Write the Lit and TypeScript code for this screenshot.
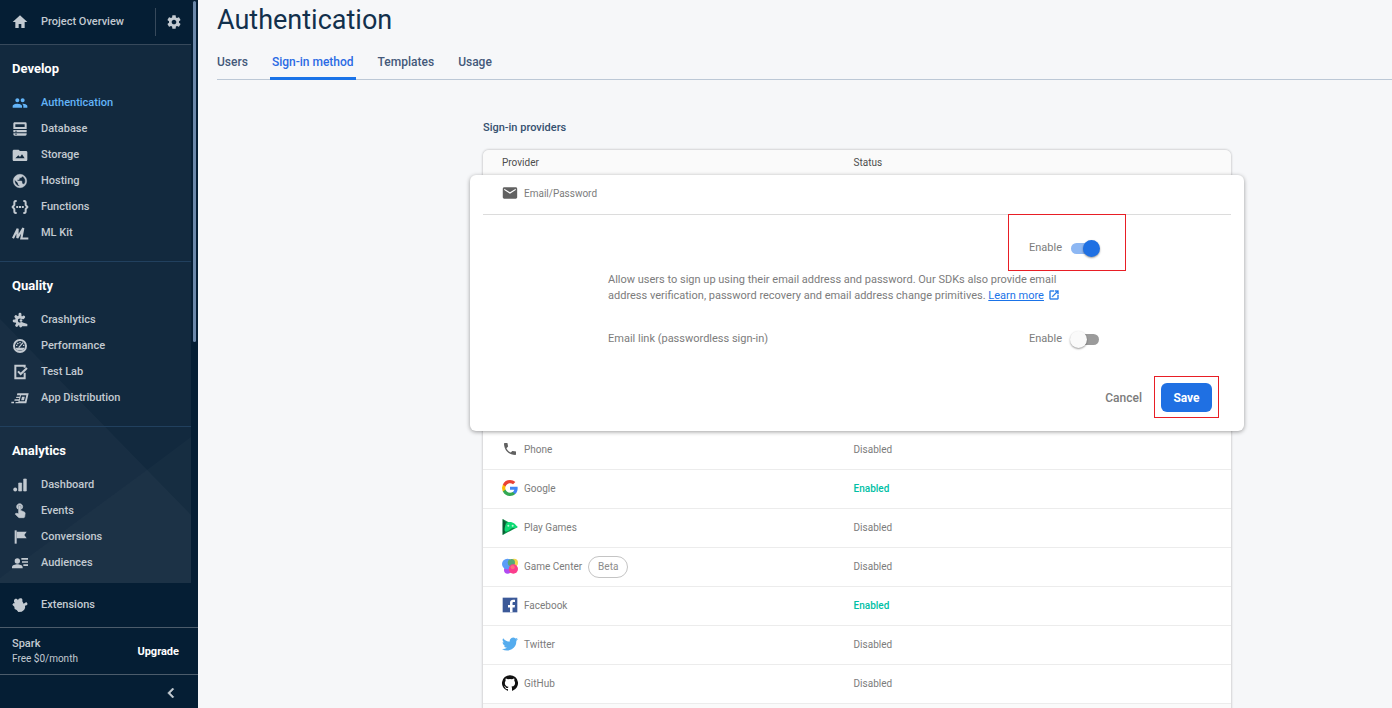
import { LitElement, html, svg, css } from "lit";
import type { TemplateResult } from "lit";
import { customElement, state } from "lit/decorators.js";
import { classMap } from "lit/directives/class-map.js";

const shapes: Record<string, unknown> = {
  home: svg`<path d="M10 21v-6h4v6h5v-9h4L12 2 1 12h4v9z"/>`,
  gear: svg`<path d="M19.43 12.98c.04-.32.07-.64.07-.98s-.03-.66-.07-.98l2.11-1.65c.19-.15.24-.42.12-.64l-2-3.46c-.12-.22-.39-.3-.61-.22l-2.49 1c-.52-.4-1.08-.73-1.69-.98l-.38-2.65C14.46 2.18 14.25 2 14 2h-4c-.25 0-.46.18-.49.42l-.38 2.65c-.61.25-1.17.59-1.69.98l-2.49-1c-.23-.09-.49 0-.61.22l-2 3.46c-.13.22-.07.49.12.64l2.11 1.65c-.04.32-.07.65-.07.98s.03.66.07.98l-2.11 1.65c-.19.15-.24.42-.12.64l2 3.46c.12.22.39.3.61.22l2.49-1c.52.4 1.08.73 1.69.98l.38 2.65c.03.24.24.42.49.42h4c.25 0 .46-.18.49-.42l.38-2.65c.61-.25 1.17-.59 1.69-.98l2.49 1c.23.09.49 0 .61-.22l2-3.46c.12-.22.07-.49-.12-.64l-2.11-1.65zM12 15.5c-1.93 0-3.5-1.57-3.5-3.5s1.57-3.5 3.5-3.5 3.5 1.57 3.5 3.5-1.57 3.5-3.5 3.5z"/>`,
  people: svg`<path d="M16 11c1.66 0 2.99-1.34 2.99-3S17.66 5 16 5s-3 1.34-3 3 1.34 3 3 3zm-8 0c1.66 0 2.99-1.34 2.99-3S9.66 5 8 5 5 6.34 5 8s1.34 3 3 3zm0 2c-2.33 0-7 1.17-7 3.5V19h14v-2.5c0-2.33-4.67-3.5-7-3.5zm8 0c-.29 0-.62.02-.97.05 1.16.84 1.97 1.97 1.97 3.45V19h6v-2.5c0-2.33-4.67-3.5-7-3.5z"/>`,
  database: svg`<path fill-rule="evenodd" d="M4 2h16a2 2 0 0 1 2 2v8H2V4c0-1.100.9-2 2-2zm1 3v4h14V5zM2 13.500h20V17H2zM5 14.500v1.500h2v-1.500zM2 18.500h20V20a2 2 0 0 1-2 2H4a2 2 0 0 1-2-2zM5 19.300v1.500h2v-1.500z"/>`,
  storage: svg`<path fill-rule="evenodd" d="M3 4h7l2 2h9c1.100 0 2 .9 2 2v11c0 1.100-.9 2-2 2H3c-1.100 0-2-.9-2-2V6c0-1.100.9-2 2-2zm2 13h14l-4-6-3 4-2.500-2.500z"/>`,
  hosting: svg`<path d="M12 2C6.480 2 2 6.480 2 12s4.480 10 10 10 10-4.480 10-10S17.520 2 12 2zm-1 17.930c-3.950-.49-7-3.850-7-7.930 0-.62.080-1.210.21-1.790L9 15v1c0 1.100.9 2 2 2v1.930zm6.900-2.540c-.26-.81-1-1.390-1.900-1.390h-1v-3c0-.55-.45-1-1-1H8v-2h2c.55 0 1-.45 1-1V7h2c1.100 0 2-.9 2-2v-.41c2.930 1.190 5 4.060 5 7.410 0 2.080-.8 3.970-2.100 5.390z" stroke="currentColor" stroke-width=".7"/>`,
  functions: svg`<path d="M7 3H5.500C4 3 3.500 4 3.500 5.500V9L1 12l2.500 3v3.500C3.500 20 4 21 5.500 21H7M17 3h1.500C20 3 20.500 4 20.500 5.500V9l2.500 3-2.500 3v3.500c0 1.500-.5 2.500-2 2.500H17" fill="none" stroke="currentColor" stroke-width="3"/><path d="M6.300 10.600h3v3h-3zm4.200 0h3v3h-3zm4.200 0h3v3h-3z"/>`,
  mlkit: svg`<path d="M1.500 20 8.500 5.500 8 19.500 17 4.500 14 20.200h10.500" fill="none" stroke="currentColor" stroke-width="3.200"/>`,
  crash: svg`<g fill="none" stroke="currentColor"><path d="M15.500 9.500a5 5 0 1 0 0 6.500" stroke-width="4"/><path d="M12 7V3.500M7.500 8.500 5.800 7M6.500 13.500H3.200M8.500 18l-1.500 2M13 19v2M16.500 8.500l1-1" stroke-width="4.400" stroke-linecap="round"/></g><circle cx="13.500" cy="12.800" r="2"/><path d="M15 15.500 23 18v3.500h-8z"/>`,
  performance: svg`<circle cx="12" cy="12" r="9" fill="none" stroke="currentColor" stroke-width="3"/><path d="M6 14.500h12v2c-3 3-9 3-12 0z"/><path d="M10 14.500 16.500 7M6 11h2M8 7.500l1.500 1.500M12 6v2M16.500 11h2" fill="none" stroke="currentColor" stroke-width="2"/>`,
  testlab: svg`<path d="M19 13v8.500H5v-19h14v3" fill="none" stroke="currentColor" stroke-width="3"/><path d="m9 11 4 4L22.500 6" fill="none" stroke="currentColor" stroke-width="3"/>`,
  distribution: svg`<path fill-rule="evenodd" d="M8 5h17l-3.500 15H5L5.500 18h4l.5-2H3.500L4 14h6.500l.5-2H6l.6-2h4.900l.4-2H7.300zM13.500 8l-2.200 9h8L21.500 8z"/><path d="M15 10h4.200l-1.200 5.200h-4.200zM-1 17.500h4V20h-4z"/>`,
  dashboard: svg`<path d="M17.500 3h4v18h-4zM10 9h4.500v12H10z" stroke="currentColor" stroke-linejoin="round"/><circle cx="4.800" cy="18.700" r="2.900"/>`,
  events: svg`<path d="M9 11.240V7.500C9 6.120 10.120 5 11.500 5S14 6.120 14 7.500v3.740c1.210-.81 2-2.180 2-3.740C16 5.010 13.990 3 11.500 3S7 5.010 7 7.500c0 1.560.79 2.930 2 3.740zm9.840 4.630-4.540-2.260c-.17-.07-.35-.11-.54-.11H13v-6c0-.83-.67-1.500-1.500-1.500S10 6.670 10 7.500v10.740l-3.430-.72c-.08-.01-.15-.03-.24-.03-.31 0-.59.13-.79.33l-.79.8 4.940 4.940c.27.27.65.44 1.060.44h6.790c.75 0 1.330-.55 1.440-1.280l.75-5.270c.01-.07.02-.14.02-.2 0-.62-.38-1.160-.91-1.380z" transform="translate(0 -2)" stroke="currentColor"/>`,
  flag: svg`<path d="M4 2h3v20H4z"/><path d="M7 4h15l-3.500 5 3.500 5H7z"/>`,
  audiences: svg`<circle cx="8" cy="9" r="4"/><path d="M0 20v-2c0-2.700 5-4.200 8-4.200s8 1.500 8 4.200v2zM14 4.500h10V7H14zm1 4.700h9v2.500h-9zm2 4.700h7v2.500h-7z"/>`,
  funnel: svg`<path d="M5 3h5l1 9H4zM13 12h5v9h-5z"/>`,
  extensions: svg`<path d="M4 3.500C6 2 8 3 9 5c.5-2 2-3.500 4.500-3 2 .5 2.500 2 2 4.500l2 3.500 4-2.500 2 3-1.500 2-2.500.5c1 3.500-1 7-5 9l-5 .5-2.500-3L4 18l-.5-3.500-3-3 2-2.500 2 .5C2.500 7.500 2.500 5 4 3.500z"/>`,
  chevron: svg`<path d="M15.410 7.410 14 6l-6 6 6 6 1.410-1.410L10.830 12z" transform="translate(-3 -3) scale(1.250)" stroke="currentColor" stroke-width=".6"/>`,
  mail: svg`<path d="M20 4H4c-1.100 0-1.990.9-1.990 2L2 18c0 1.100.9 2 2 2h16c1.100 0 2-.9 2-2V6c0-1.100-.9-2-2-2zm0 4-8 5-8-5V6l8 5 8-5v2z" transform="translate(-1 -1) scale(1.080)"/>`,
  phone: svg`<path d="M6.620 10.790c1.440 2.830 3.760 5.140 6.590 6.590l2.200-2.200c.27-.27.67-.36 1.020-.24 1.120.37 2.330.57 3.570.57.55 0 1 .45 1 1V20c0 .55-.45 1-1 1-9.390 0-17-7.610-17-17 0-.55.45-1 1-1h3.500c.55 0 1 .45 1 1 0 1.250.2 2.450.57 3.570.11.35.03.74-.25 1.020l-2.200 2.200z"/>`,
  open: svg`<path d="M19 19H5V5h7V3H5c-1.110 0-2 .9-2 2v14c0 1.100.89 2 2 2h14c1.100 0 2-.9 2-2v-7h-2v7zM14 3v2h3.590l-9.830 9.830 1.410 1.410L19 6.410V10h2V3h-7z" stroke="currentColor" stroke-width=".6"/>`,
  google: svg`<path fill="#4285f4" d="M23.500 12.270c0-.79-.07-1.540-.19-2.270H12v4.510h6.470a5.570 5.570 0 0 1-2.400 3.580v3h3.860c2.260-2.090 3.570-5.170 3.570-8.820z"/><path fill="#34a853" d="M12 24c3.240 0 5.950-1.080 7.930-2.910l-3.860-3c-1.080.72-2.450 1.160-4.070 1.160-3.130 0-5.780-2.110-6.730-4.960H1.290v3.090A12 12 0 0 0 12 24z"/><path fill="#fbbc05" d="M5.270 14.290a7.200 7.200 0 0 1 0-4.580V6.620H1.290a12 12 0 0 0 0 10.760z"/><path fill="#ea4335" d="M12 4.750c1.770 0 3.350.61 4.600 1.800l3.420-3.420C17.950 1.190 15.240 0 12 0A12 12 0 0 0 1.290 6.620l3.980 3.090C6.220 6.860 8.870 4.750 12 4.750z"/>`,
  play: svg`<path fill="#0a8a45" d="M1 0v24l22.500-12z"/><path fill="#0b5b34" d="M1 0v24l4-5V5z"/><path fill="#0ddb73" d="M7 6c3-2.500 8-2 12 1l4.500 5-3 2c-3-1-6-.5-8 1.500-3 3-8 4.500-8.500 2C3.500 14.500 4.500 9 7 6z"/><circle cx="9.500" cy="10" r="1.500" fill="#baf7d5"/><circle cx="16" cy="10" r="1.500" fill="#baf7d5"/>`,
  gamecenter: svg`<circle cx="18" cy="7" r="6" fill="#f3d64a"/><circle cx="8.500" cy="18" r="5.500" fill="#b14af0"/><circle cx="8" cy="9" r="8" fill="#5a9cf8"/><circle cx="14" cy="7" r="5.500" fill="#55a878"/><circle cx="17" cy="16.500" r="7" fill="#fb3d8c"/><circle cx="16" cy="14" r="3" fill="#ff6c7e"/>`,
  facebook: svg`<path fill="#3b5998" d="M1 1h22v22H1z"/><path fill="#fff" d="M19.500 4v3.600h-2c-1.300 0-1.700.6-1.700 1.700V12h3.700l-.5 3.700h-3.200V23H12v-7.300H9V12h3V8.800C12 5.700 13.800 4 16.700 4z"/>`,
  twitter: svg`<path fill="#55acee" d="M24 4.600a10 10 0 0 1-2.800.8 5 5 0 0 0 2.100-2.700 10 10 0 0 1-3.100 1.200 4.900 4.900 0 0 0-8.400 4.500A14 14 0 0 1 1.700 3.200a4.900 4.900 0 0 0 1.500 6.500A5 5 0 0 1 1 9.100a4.900 4.900 0 0 0 4 4.900 5 5 0 0 1-2.300.1 4.900 4.900 0 0 0 4.600 3.400A9.900 9.900 0 0 1 0 19.500 14 14 0 0 0 21.500 7.100 10 10 0 0 0 24 4.600z"/>`,
  github: svg`<path fill="#111" d="M12 .3a12 12 0 0 0-3.800 23.400c.6.1.8-.3.8-.6v-2c-3.300.7-4-1.600-4-1.600-.6-1.400-1.400-1.800-1.400-1.800-1-.7.1-.7.1-.7 1.200 0 1.900 1.200 1.900 1.200 1 1.800 2.800 1.300 3.500 1 0-.8.400-1.300.7-1.600-2.700-.3-5.500-1.300-5.500-6 0-1.200.5-2.300 1.300-3.100-.2-.4-.6-1.600 0-3.200 0 0 1-.3 3.400 1.200a11.500 11.500 0 0 1 6 0c2.300-1.500 3.300-1.200 3.300-1.200.6 1.600.2 2.800 0 3.200.9.8 1.300 1.900 1.300 3.200 0 4.600-2.800 5.600-5.500 5.900.5.400.9 1 .9 2.200v3.300c0 .3.100.7.800.6A12 12 0 0 0 12 .3"/>`,
};

const icon = (name: string): TemplateResult =>
  html`<svg class="icon" viewBox="0 0 24 24" fill="currentColor" aria-hidden="true">${shapes[name]}</svg>`;

const base = css`
  * { box-sizing: border-box; }
  a { color: inherit; text-decoration: none; }
  .icon { width: 16px; height: 16px; flex: none; display: block; overflow: visible; }
  button { font: inherit; border: 0; background: none; padding: 0; cursor: pointer; color: inherit; }
`;

const groups = [
  { title: "Develop", items: [["people", "Authentication"], ["database", "Database"], ["storage", "Storage"], ["hosting", "Hosting"], ["functions", "Functions"], ["mlkit", "ML Kit"]] },
  { title: "Quality", items: [["crash", "Crashlytics"], ["performance", "Performance"], ["testlab", "Test Lab"], ["distribution", "App Distribution"]] },
  { title: "Analytics", items: [["dashboard", "Dashboard"], ["events", "Events"], ["flag", "Conversions"], ["audiences", "Audiences"], ["funnel", ""]] },
];

@customElement("side-nav")
export class SideNav extends LitElement {
  static styles = [base, css`
    :host { display: flex; flex-direction: column; width: 198px; flex: none; background: #051e34; color: #c3cad1; font: 500 11px/16px Roboto, sans-serif; }
    .scroll { flex: 1; min-height: 0; display: flex; position: relative; }
    .menu { flex: 1; min-width: 0; overflow: hidden; position: relative; margin-right: 7px; display: flex; flex-direction: column; }
    .thumb { position: absolute; right: 2px; top: 1px; width: 3px; height: 341px; border-radius: 2px; background: #6b88aa; }
    .overview { display: flex; align-items: center; flex: none; height: 45px; padding-left: 12px; border-bottom: 1px solid #37495b; }
    .overview a { display: flex; align-items: center; gap: 13px; flex: 1; }
    .overview button { height: 28px; width: 36px; display: grid; place-items: center; border-left: 1px solid #37495b; }
    .groups { flex: 1; min-height: 0; overflow: hidden; background: #12293e; position: relative; }
    .facets { position: absolute; left: 0; bottom: 0; width: 100%; height: 264px; }
    .group { position: relative; padding: 16px 12px 15px; border-bottom: 1px solid #21405e; }
    .group:last-of-type { border: 0; }
    h2 { margin: 0 0 13px; font: 700 13px/16px "Google Sans", Roboto, sans-serif; color: #fff; }
    ul { list-style: none; margin: 0; padding: 0; }
    li a { display: flex; align-items: center; gap: 13px; height: 26px; }
    .current { color: #63b4f8; }
    .extensions { display: flex; align-items: center; gap: 13px; height: 44px; padding: 0 12px; }
    .plan { display: flex; align-items: center; justify-content: space-between; height: 48px; padding: 0 19px 0 12px; border-top: 1px solid #4c5c6b; border-bottom: 1px solid #4c5c6b; line-height: 15px; }
    .plan small { display: block; font: 400 10px/15px Roboto, sans-serif; }
    .upgrade { color: #fff; font-weight: 700; }
    .collapse { display: flex; justify-content: flex-end; align-items: center; height: 33px; padding: 2px 19px 0 0; }
  `];

  render() {
    return html`
      <div class="scroll">
        <nav class="menu" aria-label="Project">
          <div class="overview">
            <a href="#overview">${icon("home")}Project Overview</a>
            <button aria-label="Project settings">${icon("gear")}</button>
          </div>
          <div class="groups">
            <svg class="facets" viewBox="0 0 191 264" preserveAspectRatio="none" aria-hidden="true">
              <path d="M0 0 191 196V264H0z" fill="#fff" fill-opacity=".026" />
              <path d="M191 118 147 151 0 259V264H191z" fill="#fff" fill-opacity=".018" />
            </svg>
            ${groups.map((g) => html`
              <section class="group">
                <h2>${g.title}</h2>
                <ul>
                  ${g.items.map(([glyph, label]) => html`
                    <li><a href="#${glyph}" class=${classMap({ current: glyph === "people" })}>${icon(glyph)}${label}</a></li>`)}
                </ul>
              </section>`)}
          </div>
        </nav>
        <div class="thumb"></div>
      </div>
      <a class="extensions" href="#extensions">${icon("extensions")}Extensions</a>
      <div class="plan">
        <div>Spark<small>Free $0/month</small></div>
        <button class="upgrade">Upgrade</button>
      </div>
      <div class="collapse"><button aria-label="Collapse menu">${icon("chevron")}</button></div>
    `;
  }
}

const providers = [
  { glyph: "phone", name: "Phone", on: false },
  { glyph: "google", name: "Google", on: true },
  { glyph: "play", name: "Play Games", on: false },
  { glyph: "gamecenter", name: "Game Center", on: false, beta: true },
  { glyph: "facebook", name: "Facebook", on: true },
  { glyph: "twitter", name: "Twitter", on: false },
  { glyph: "github", name: "GitHub", on: false },
];

@customElement("provider-table")
export class ProviderTable extends LitElement {
  @state() private password = true;
  @state() private link = false;

  static styles = [base, css`
    :host { display: block; font: 400 10px/16px Roboto, sans-serif; color: #7c7c7c; }
    .card { border-radius: 6px 6px 0 0; background: #fafafa; box-shadow: 0 0 2px 1px rgba(0, 0, 0, .14); padding-bottom: 24px; }
    table { width: 100%; border-collapse: separate; border-spacing: 0; table-layout: fixed; }
    th { height: 25px; padding: 0 19px; text-align: left; font: 400 10px/16px Roboto, sans-serif; color: #4d4d4d; background: #fafafa; }
    th:first-child { width: 47%; border-radius: 6px 0 0 0; }
    th:last-child { border-radius: 0 6px 0 0; }
    td { height: 39px; padding: 0 19px; border-bottom: 1px solid #ececec; background: #fff; }
    .name { display: flex; align-items: center; gap: 6px; }
    .name .icon { color: #616161; margin-bottom: 2px; }
    .beta { border: 1px solid #c4c4c4; border-radius: 11px; padding: 2px 9px; color: #8c8c8c; }
    .on { color: #00bfa5; font-weight: 500; }
    td.open { padding: 0; border: 0; }
    .panel { position: relative; margin: 0 -13px; height: 256px; padding: 0 13px; background: #fff; border-radius: 6px; box-shadow: 0 1px 4px rgba(0, 0, 0, .38); }
    .panel .name { height: 40px; padding: 0 19px 2px; border-bottom: 1px solid #dcdcdc; }
    .body { padding: 24px 132px 0 125px; font-size: 11px; }
    .switch { display: flex; justify-content: flex-end; }
    .switch label { display: flex; align-items: center; gap: 9px; position: relative; }
    .password { height: 18px; }
    input { appearance: none; position: relative; margin: 0; width: 28px; height: 11px; border-radius: 6px; background: #9b9b9b; cursor: pointer; }
    input::before { content: ""; position: absolute; left: -1px; top: -3px; width: 17px; height: 17px; border-radius: 50%; background: #fafafa; box-shadow: 0 1px 2px rgba(0, 0, 0, .4); }
    input:checked { background: #8db7f3; }
    input:checked::before { left: 12px; background: #1f70e3; }
    p { margin: 15px 0 0; padding-right: 24px; line-height: 16px; }
    .more { color: #1a73e8; text-decoration: underline; }
    .more-icon { display: inline-block; vertical-align: -2px; color: #1a73e8; margin-left: 4px; }
    .more-icon .icon { width: 12px; height: 12px; }
    .link { display: flex; justify-content: space-between; align-items: center; margin-top: 27px; }
    .actions { display: flex; justify-content: flex-end; align-items: center; gap: 19px; margin-top: 36px; padding-right: 19px; font-size: 12px; font-weight: 500; }
    .actions button { height: 29px; }
    .save { width: 51px; border-radius: 6px; background: #1f70e3; color: #fff; font-weight: 700; position: relative; }
    .marked::after { content: ""; position: absolute; border: 1px solid #e81e25; pointer-events: none; }
    label.marked::after { inset: -25px -27px -14px -21px; }
    .save.marked::after { inset: -7px -7px -6px; }
  `];

  private editor() {
    return html`
      <div class="panel">
        <div class="name">${icon("mail")}Email/Password</div>
        <div class="body">
          <div class="switch password">
            <label class="marked">Enable
              <input type="checkbox" role="switch" .checked=${this.password} @change=${() => (this.password = !this.password)} />
            </label>
          </div>
          <p>Allow users to sign up using their email address and password. Our SDKs also provide email address verification, password recovery and email address change primitives. <a class="more" href="#learn">Learn more</a><span class="more-icon">${icon("open")}</span></p>
          <div class="link">
            <span>Email link (passwordless sign-in)</span>
            <div class="switch">
              <label>Enable
                <input type="checkbox" role="switch" .checked=${this.link} @change=${() => (this.link = !this.link)} />
              </label>
            </div>
          </div>
        </div>
        <div class="actions"><button>Cancel</button><button class="save marked">Save</button></div>
      </div>`;
  }

  render() {
    return html`
      <div class="card">
        <table>
          <thead><tr><th>Provider</th><th>Status</th></tr></thead>
          <tbody>
            <tr><td class="open" colspan="2">${this.editor()}</td></tr>
            ${providers.map((p) => html`
              <tr>
                <td><div class="name">${icon(p.glyph)}${p.name}${p.beta ? html`<span class="beta">Beta</span>` : ""}</div></td>
                <td class=${classMap({ on: p.on })}>${p.on ? "Enabled" : "Disabled"}</td>
              </tr>`)}
          </tbody>
        </table>
      </div>`;
  }
}

@customElement("app-root")
export class AppRoot extends LitElement {
  static styles = [base, css`
    :host { display: flex; height: 100vh; overflow: hidden; background: #f6f7f9; font-family: Roboto, sans-serif; }
    main { flex: 1; min-width: 0; overflow-y: auto; scrollbar-width: none; }
    h1 { margin: 0; padding: 4px 0 0 19px; font: 400 27px/32px "Google Sans", Roboto, sans-serif; color: #12304c; }
    .tabs { display: flex; gap: 20px; margin-left: 19px; padding-top: 9px; border-bottom: 1px solid #bcc8d6; font: 500 12px/16px Roboto, sans-serif; color: #44597a; }
    .tabs a { padding: 9px 2px 7px; margin-bottom: -1px; border-bottom: 3px solid transparent; }
    .tabs a:first-child { padding-left: 0; }
    .tabs .active { color: #2b6be4; border-bottom-color: #1a73e8; border-radius: 2px 2px 0 0; }
    .content { padding: 40px 161px 0 285px; }
    h2 { margin: 0 0 14px; font: 500 11px/16px Roboto, sans-serif; color: #35506f; }
  `];

  render() {
    return html`
      <side-nav></side-nav>
      <main>
        <h1>Authentication</h1>
        <nav class="tabs" aria-label="Authentication sections">
          <a href="#users">Users</a><a href="#method" class="active">Sign-in method</a><a href="#templates">Templates</a><a href="#usage">Usage</a>
        </nav>
        <section class="content">
          <h2>Sign-in providers</h2>
          <provider-table></provider-table>
        </section>
      </main>`;
  }
}
